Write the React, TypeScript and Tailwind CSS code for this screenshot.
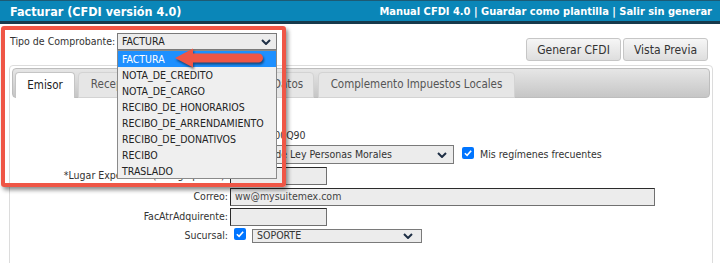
import React from "react";

const tipos = [
  "FACTURA",
  "NOTA_DE_CREDITO",
  "NOTA_DE_CARGO",
  "RECIBO_DE_HONORARIOS",
  "RECIBO_DE_ARRENDAMIENTO",
  "RECIBO_DE_DONATIVOS",
  "RECIBO",
  "TRASLADO",
];

const Chevron = () => (
  <svg viewBox="0 0 10 6" className="w-[10px] h-[6px]">
    <path d="M1 1 L5 5 L9 1" stroke="#1e2f45" strokeWidth="2" fill="none" />
  </svg>
);

const Check = () => (
  <span className="inline-flex w-[12px] h-[12px] items-center justify-center rounded-[2px] bg-[#0075ff]">
    <svg viewBox="0 0 12 12" className="w-[10px] h-[10px]">
      <path d="M2.2 6.3 L4.9 8.8 L9.8 3.2" stroke="white" strokeWidth="1.9" fill="none" />
    </svg>
  </span>
);

const Field = ({ label, children, className }: { label: string; children?: React.ReactNode; className: string }) => (
  <div className={`flex items-center ${className}`}>
    <div className="w-[216px] shrink-0 whitespace-nowrap text-right">{label}</div>
    <div className="ml-[2px] flex items-center">{children}</div>
  </div>
);

const inputCls =
  "h-[18px] bg-[#ececec] border border-t-[#2b2b2b] border-l-[#2b2b2b] border-b-[#707070] border-r-[#707070] pl-[4px] flex items-center text-[#444]";

export default function App() {
  return (
    <div className="relative w-[720px] h-[263px] overflow-hidden bg-white font-['DejaVu_Sans_Condensed','DejaVu_Sans',sans-serif] text-[10.5px] text-[#333]">
      <header className="h-[24px] flex items-center justify-between bg-[#0a86b8] border-t border-t-[#1d5a74] border-b-[3px] border-b-[#173a4c] pl-[10px] pr-[8px] pt-[2px] text-white">
        <h1 className="text-[12.5px] font-bold">Facturar (CFDI versión 4.0)</h1>
        <nav className="text-[11px] font-bold">Manual CFDI 4.0 | Guardar como plantilla | Salir sin generar</nav>
      </header>

      <div className="flex items-start justify-between pt-[9px] pl-[10px] pr-[12px]">
        <div className="flex items-center">
          <span className="w-[107px]">Tipo de Comprobante:</span>
          <div className="w-[160px] h-[17px] bg-[#ececec] border border-[#7a7a7a] flex items-center justify-between pl-[4px] pr-[5px] text-[#222]">
            FACTURA
            <Chevron />
          </div>
        </div>
        <div className="mt-[5px] flex gap-[2px] text-[12px] text-[#333]">
          <button className="w-[95px] h-[23px] rounded-[3px] border border-[#c6c6c6] bg-gradient-to-b from-[#f6f6f6] to-[#dedede]">
            Generar CFDI
          </button>
          <button className="w-[85px] h-[23px] rounded-[3px] border border-[#c6c6c6] bg-gradient-to-b from-[#f6f6f6] to-[#dedede]">
            Vista Previa
          </button>
        </div>
      </div>

      <div className="mt-[4px] ml-[9px] w-[704px] h-[220px] border border-[#dcdcdc] rounded-[4px] p-[2px]">
        <div className="h-[30px] rounded-[4px] border border-[#bdbdbd] bg-gradient-to-b from-[#e6e6e6] to-[#c6c6c6] flex items-end pl-[2px] text-[11.5px] text-[#555]">
          <div className="w-[60px] h-[26px] -mb-px rounded-t-[4px] border border-[#c5c5c5] border-b-0 bg-white flex items-center justify-center text-[#222]">
            Emisor
          </div>
          <div className="ml-[3px] w-[72px] h-[26px] -mb-px rounded-t-[4px] border border-[#d3d3d3] bg-[#e6e6e6] flex items-center justify-center">
            Receptor
          </div>
          <div className="ml-[3px] w-[75px] h-[26px] -mb-px rounded-t-[4px] border border-[#d3d3d3] bg-[#e6e6e6] flex items-center justify-center">
            Conceptos
          </div>
          <div className="ml-[3px] w-[83px] h-[26px] -mb-px rounded-t-[4px] border border-[#d3d3d3] bg-[#e6e6e6] flex items-center justify-center">
            Otros Datos
          </div>
          <div className="ml-[4px] w-[197px] h-[26px] -mb-px rounded-t-[4px] border border-[#d3d3d3] bg-[#e6e6e6] flex items-center justify-center">
            Complemento Impuestos Locales
          </div>
        </div>

        <div className="pt-[29px] flex flex-col">
          <Field label="*RFC:" className="h-[18px]">
            <span className="text-[#333]">MSE190900Q90</span>
          </Field>
          <Field label="*Régimen Fiscal:" className="h-[19px]">
            <div className="w-[224px] h-[19px] bg-[#ececec] border border-[#7a7a7a] flex items-center justify-between pl-[4px] pr-[6px] text-[#333]">
              General de Ley Personas Morales
              <Chevron />
            </div>
            <span className="ml-[8px]">
              <Check />
            </span>
            <span className="ml-[6px] text-[#333]">Mis regímenes frecuentes</span>
          </Field>
          <Field label="*Lugar Expedición (Código postal):" className="mt-[3px] h-[18px]">
            <div className={`w-[97px] ${inputCls}`}>01000</div>
          </Field>
          <Field label="Correo:" className="mt-[3px] h-[18px]">
            <div className={`w-[425px] ${inputCls}`}>ww@mysuitemex.com</div>
          </Field>
          <Field label="FacAtrAdquirente:" className="mt-[2px] h-[18px]">
            <div className={`w-[97px] ${inputCls}`} />
          </Field>
          <Field label="Sucursal:" className="mt-[2px] h-[15px]">
            <span className="ml-[4px]">
              <Check />
            </span>
            <div className="ml-[6px] w-[170px] h-[14px] bg-[#ececec] border border-[#7a7a7a] flex items-center justify-between pl-[4px] pr-[8px] text-[#333]">
              SOPORTE
              <Chevron />
            </div>
          </Field>
        </div>
      </div>

      {/* lista desplegada */}
      <ul className="absolute left-[117px] top-[50px] w-[160px] h-[129px] border border-[#8a8a8a] bg-[#efefef] text-[#222]">
        {tipos.map((t, i) => (
          <li
            key={t}
            className={
              i === 0
                ? "h-[16px] leading-[16px] pl-[4px] bg-[#1e90ff] text-white"
                : "h-[16px] leading-[16px] pl-[4px]"
            }
          >
            {t}
          </li>
        ))}
      </ul>

      {/* marco rojo */}
      <div className="absolute left-[1px] top-[26px] w-[285px] h-[161px] border-4 border-[#ef5646] rounded-[3px] shadow-[2px_3px_4px_rgba(0,0,0,0.45)]" />

      {/* flecha */}
      <svg
        viewBox="0 0 96 24"
        className="absolute left-[172px] top-[46px] w-[96px] h-[24px] drop-shadow-[1px_2px_1px_rgba(0,0,0,0.5)]"
      >
        <path
          d="M3 12 L21 2.5 L21 7.5 L86.5 7.5 A4.5 4.5 0 0 1 86.5 16.5 L21 16.5 L21 21.5 Z"
          fill="#ef5646"
        />
      </svg>
    </div>
  );
}
